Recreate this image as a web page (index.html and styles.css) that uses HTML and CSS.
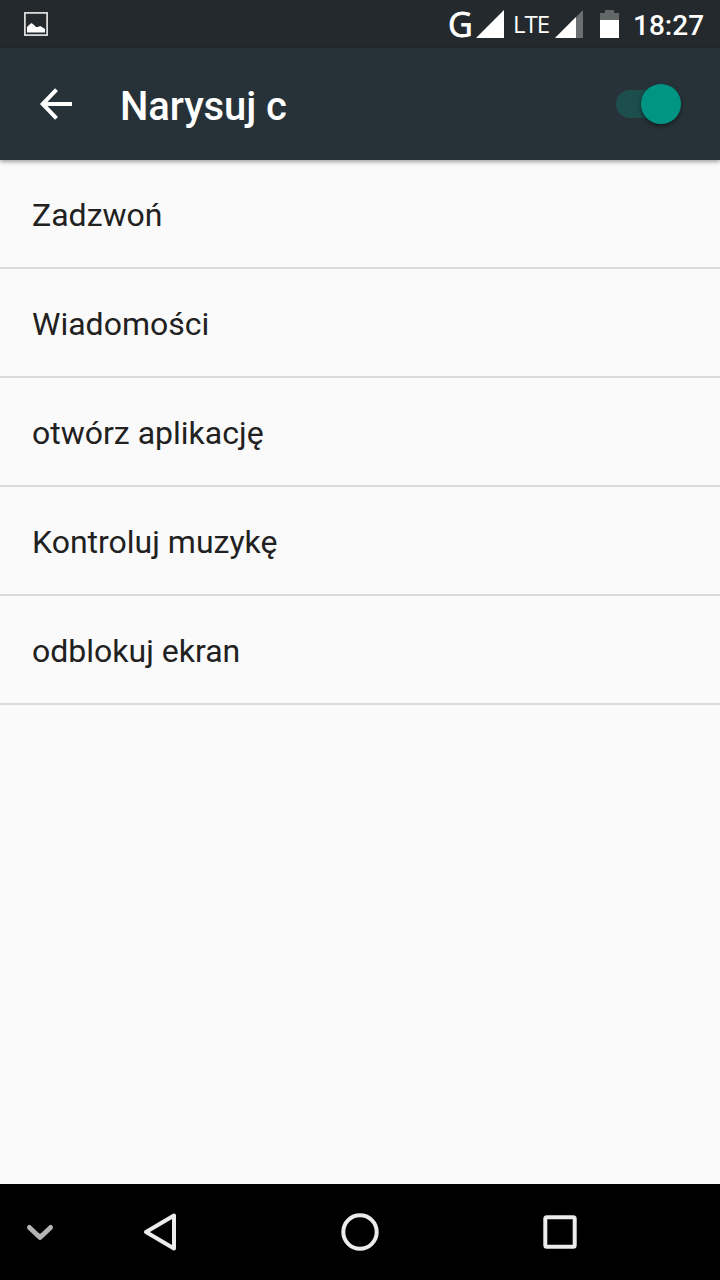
FILE: index.html
```html
<!DOCTYPE html>
<html lang="pl">
<head>
<meta charset="utf-8">
<title>Narysuj c</title>
<link rel="stylesheet" href="styles.css">
</head>
<body>
<div class="screen">
  <div class="status">
    <svg class="picture" width="24" height="24" viewBox="0 0 24 24"><rect x=".9" y=".9" width="22.2" height="22.2" fill="none" stroke="#d8d8d8" stroke-width="1.8"/><path d="M3 20.5V15L5 13L7.5 11L10 13L12 15H14L16 14L18 15L21 17V20.5Z" fill="#fff"/></svg>
    <span class="roaming">G</span>
    <svg class="signal-full" width="28" height="28" viewBox="0 0 28 28"><path d="M0 28L28 0V28Z" fill="#fff"/></svg>
    <span class="lte">LTE</span>
    <svg class="signal-part" width="28" height="28" viewBox="0 0 28 28"><path d="M0 28L28 0V28Z" fill="#6b6f70"/><path d="M0 28L21 7V28Z" fill="#fff"/></svg>
    <svg class="battery" width="19" height="28" viewBox="0 0 19 28"><path d="M0 10V3H5V0H14V3H19V10Z" fill="#646768"/><path d="M0 10H19V28H0Z" fill="#fff"/></svg>
    <span class="clock">18:27</span>
  </div>
  <header class="appbar">
    <svg class="back" width="34" height="34" viewBox="0 0 34 34"><path d="M33 17H5M17.5 2.7L3.7 17L17.5 31.3" fill="none" stroke="#fff" stroke-width="4"/></svg>
    <h1 class="title">Narysuj c</h1>
    <div class="switch"><div class="thumb"></div></div>
  </header>
  <ul class="list">
    <li class="row">Zadzwoń</li>
    <li class="row">Wiadomości</li>
    <li class="row">otwórz aplikację</li>
    <li class="row">Kontroluj muzykę</li>
    <li class="row">odblokuj ekran</li>
  </ul>
  <nav class="navbar">
    <svg class="nav-hide" width="28" height="18" viewBox="0 0 28 18"><path d="M3.4 3.4L14 13.6L24.6 3.4" fill="none" stroke="#b4b4b4" stroke-width="4.8" stroke-linecap="round" stroke-linejoin="round"/><path d="M9 8H10.5Q14 11.5 17.5 8H19L14 14Z" fill="#b4b4b4"/></svg>
    <svg class="nav-back" width="34" height="40" viewBox="0 0 34 40"><path d="M31 3.5V36.5L3 20Z" fill="none" stroke="#ececec" stroke-width="4" stroke-linejoin="round"/></svg>
    <svg class="nav-home" width="38" height="38" viewBox="0 0 38 38"><circle cx="19" cy="19" r="16.7" fill="none" stroke="#ececec" stroke-width="4"/></svg>
    <svg class="nav-recent" width="34" height="34" viewBox="0 0 34 34"><rect x="2.3" y="2.3" width="29.4" height="29.4" rx="1.5" fill="none" stroke="#ececec" stroke-width="4"/></svg>
  </nav>
</div>
</body>
</html>
```
FILE: styles.css
```css
* { box-sizing: border-box; }
body { margin: 0; }
.screen {
  width: 720px;
  height: 1280px;
  display: flex;
  flex-direction: column;
  background: #fafafa;
  font-family: Roboto, sans-serif;
  color: #212121;
  overflow: hidden;
}
svg { display: block; flex: none; }
.status {
  height: 48px;
  flex: none;
  display: flex;
  align-items: center;
  padding-left: 24px;
  background: #23292c;
  color: #fff;
}
.roaming {
  width: 28px;
  margin-left: 400px;
  font: 34px/48px "Open Sans", sans-serif;
  -webkit-text-stroke: 0.8px #fff;
}
.signal-full { margin-right: 9px; }
.signal-full, .signal-part { margin-top: -1px; }
.lte {
  width: 42px;
  font: 24px/48px "Open Sans", sans-serif;
  letter-spacing: -1px;
}
.battery { margin-left: 17px; }
.clock {
  margin-left: 14px;
  margin-top: 4px;
  font-size: 28px;
  font-weight: 500;
  line-height: 48px;
}
.appbar {
  height: 112px;
  flex: none;
  display: flex;
  align-items: center;
  padding: 0 39px;
  background: #273238;
  color: #fff;
  box-shadow: 0 2px 4px rgba(0, 0, 0, 0.35);
}
.title {
  margin: 6px 0 0 47px;
  font-size: 40px;
  font-weight: 500;
  line-height: 48px;
  letter-spacing: -0.1px;
}
.switch {
  width: 65px;
  height: 28px;
  margin-left: auto;
  display: flex;
  align-items: center;
  justify-content: flex-end;
  border-radius: 14px;
  background: #1c4e4d;
}
.thumb {
  width: 40px;
  height: 40px;
  flex: none;
  border-radius: 50%;
  background: #009485;
  box-shadow: 0 2px 4px rgba(0, 0, 0, 0.45);
}
.list {
  flex: 1;
  margin: 0;
  padding: 0;
  list-style: none;
}
.row {
  height: 109px;
  padding: 3px 32px 0;
  border-bottom: 2px solid #dadada;
  font-size: 32px;
  line-height: 104px;
}
.navbar {
  height: 96px;
  flex: none;
  display: flex;
  align-items: center;
  padding-left: 26px;
  background: #000;
}
.nav-hide { margin-top: 1px; }
.nav-back { margin-left: 89px; }
.nav-home { margin-left: 164px; }
.nav-recent { margin-left: 164px; }
```
